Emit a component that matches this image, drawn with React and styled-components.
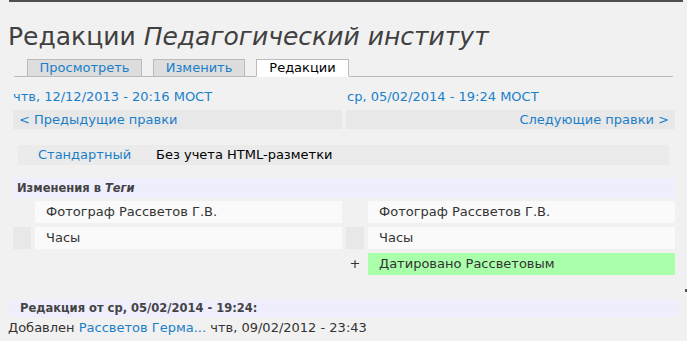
import React from "react";
import styled, { createGlobalStyle } from "styled-components";

const Global = createGlobalStyle`
  html, body { margin: 0; padding: 0; background: #f1f1f1; }
  body { font-family: "DejaVu Sans", Verdana, sans-serif; font-size: 13px; color: #333; }
  a { color: #1a7fc9; text-decoration: none; }
`;

const Page = styled.div`
  width: 687px;
  height: 341px;
  overflow: hidden;
  position: relative;
`;

const TopRule = styled.div`
  margin-left: 9px;
  width: 674px;
  height: 2px;
  background: #4f4f4f;
`;

const Title = styled.h1`
  margin: 20px 0 0 8px;
  font-size: 25px;
  line-height: 30px;
  font-weight: normal;
  color: #404040;
  white-space: nowrap;
  em { font-style: italic; }
`;

const TabBar = styled.ul`
  display: flex;
  gap: 11px;
  list-style: none;
  margin: 7px 0 0 14px;
  padding: 0 0 0 13px;
  width: 646px;
  height: 17px;
  border-bottom: 1px solid #bbb;
`;

const Tab = styled.li`
  box-sizing: border-box;
  width: ${(p) => p.$w}px;
  height: 18px;
  line-height: 16px;
  text-align: center;
  border: 1px solid #bbb;
  border-bottom-color: ${(p) => (p.$active ? "#fff" : "#bbb")};
  background: ${(p) => (p.$active ? "#fff" : "#dddddd")};
  color: ${(p) => (p.$active ? "#000" : "#1a7fc9")};
  white-space: nowrap;
`;

const Columns = styled.div`
  display: grid;
  grid-template-columns: 329px 329px;
  column-gap: 4px;
  margin-left: 13px;
  margin-top: ${(p) => p.$top || 0}px;
`;

const DateCell = styled.div`
  line-height: 18px;
  color: #1a7fc9;
  white-space: nowrap;
  padding-left: ${(p) => p.$pad || 0}px;
`;

const NavCell = styled.div`
  height: 19px;
  line-height: 19px;
  background: #e8e8e8;
  padding: 0 6px;
  text-align: ${(p) => p.$align || "left"};
  color: #1a7fc9;
  white-space: nowrap;
`;

const ModeBar = styled.div`
  display: grid;
  grid-template-columns: 118px auto;
  margin: 16px 0 0 18px;
  width: 631px;
  padding-left: 20px;
  height: 20px;
  line-height: 20px;
  background: #ebebeb;
  white-space: nowrap;
`;

const ModeItem = styled.span`
  color: ${(p) => (p.$link ? "#1a7fc9" : "#000")};
`;

const SectionHead = styled.div`
  margin: ${(p) => p.$margin};
  width: ${(p) => p.$width}px;
  box-sizing: border-box;
  height: ${(p) => p.$height}px;
  line-height: ${(p) => p.$height}px;
  padding-left: ${(p) => p.$pad}px;
  background: #eeeefc;
  font-weight: bold;
  font-size: 11.5px;
  color: #444;
  white-space: nowrap;
`;

const DiffGrid = styled.div`
  display: grid;
  grid-template-columns: 18px 307px 18px 307px;
  grid-auto-rows: 22px;
  gap: 4px;
  margin: 3px 0 0 13px;
`;

const Marker = styled.div`
  background: ${(p) => (p.$shade ? "#e8e8e8" : "transparent")};
  text-align: center;
  line-height: 22px;
  color: #333;
`;

const Content = styled.div`
  background: ${(p) => (p.$added ? "#aaffaa" : p.$empty ? "transparent" : "#fafafa")};
  line-height: 22px;
  padding-left: 11px;
  color: #333;
  white-space: nowrap;
`;

const Footer = styled.div`
  margin: 2px 0 0 8px;
  line-height: 18px;
  color: #333;
  white-space: nowrap;
`;

const EdgeMark = styled.div`
  position: absolute;
  left: 685px;
  top: 289px;
  width: 2px;
  height: 3px;
  background: #555;
`;

export default function App() {
  return (
    <Page>
      <Global />
      <TopRule />
      <Title>
        Редакции <em>Педагогический институт</em>
      </Title>
      <TabBar>
        <Tab $w={115}>Просмотреть</Tab>
        <Tab $w={92}>Изменить</Tab>
        <Tab $w={93} $active>Редакции</Tab>
      </TabBar>
      <Columns $top={11}>
        <DateCell>чтв, 12/12/2013 - 20:16 MOCT</DateCell>
        <DateCell $pad={1}>ср, 05/02/2014 - 19:24 MOCT</DateCell>
      </Columns>
      <Columns $top={4}>
        <NavCell>&lt; Предыдущие правки</NavCell>
        <NavCell $align="right">Следующие правки &gt;</NavCell>
      </Columns>
      <ModeBar>
        <ModeItem $link>Стандартный</ModeItem>
        <ModeItem>Без учета HTML-разметки</ModeItem>
      </ModeBar>
      <SectionHead $margin="13px 0 0 13px" $width={662} $height={20} $pad={4}>
        Изменения в <em>Теги</em>
      </SectionHead>
      <DiffGrid>
        <Marker />
        <Content>Фотограф Рассветов Г.В.</Content>
        <Marker />
        <Content>Фотограф Рассветов Г.В.</Content>

        <Marker $shade />
        <Content>Часы</Content>
        <Marker $shade />
        <Content>Часы</Content>

        <Marker />
        <Content $empty />
        <Marker>+</Marker>
        <Content $added>Датировано Рассветовым</Content>
      </DiffGrid>
      <SectionHead $margin="25px 0 0 9px" $width={670} $height={17} $pad={11}>
        Редакция от ср, 05/02/2014 - 19:24:
      </SectionHead>
      <Footer>
        Добавлен <a>Рассветов Герма...</a> чтв, 09/02/2012 - 23:43
      </Footer>
      <EdgeMark />
    </Page>
  );
}
